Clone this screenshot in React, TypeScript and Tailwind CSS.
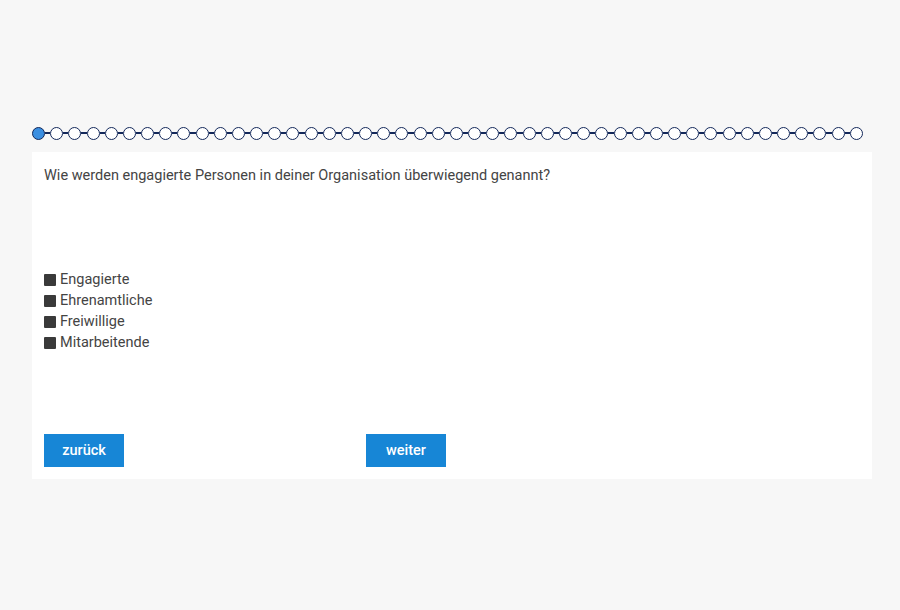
import React from "react";

const STEPS = 46;
const OPTIONS = ["Engagierte", "Ehrenamtliche", "Freiwillige", "Mitarbeitende"];

export default function App() {
  return (
    <div className="min-h-[610px] w-[900px] bg-[#f7f7f7] pt-[126px] font-['Roboto','Liberation_Sans',sans-serif]">
      <div className="mx-[32px] w-[836px]">
        {/* Fortschritt */}
        <div className="flex h-[14px] w-[831px] items-center">
          {Array.from({ length: STEPS }).map((_, i) => (
            <React.Fragment key={i}>
              {i > 0 && <div className="h-[2px] flex-1 bg-[#13285a]" />}
              <div
                className={`h-[13px] w-[13px] shrink-0 rounded-full border-[1.5px] border-[#13285a] ${
                  i === 0 ? "bg-[#3b8fe1]" : "bg-white"
                }`}
              />
            </React.Fragment>
          ))}
        </div>

        {/* Frage */}
        <div className="mt-[12px] h-[327px] w-[840px] bg-white px-[12px] pt-[14px]">
          <p className="text-[14.5px] leading-[20px] text-[#444]">
            Wie werden engagierte Personen in deiner Organisation überwiegend genannt?
          </p>

          <ul className="mt-[83px] text-[14.5px] leading-[21px] text-[#444]">
            {OPTIONS.map((o) => (
              <li key={o} className="flex items-center gap-[4px]">
                <span className="h-[12px] w-[12px] rounded-[1px] bg-[#3a3a3a]" />
                <span>{o}</span>
              </li>
            ))}
          </ul>

          <div className="mt-[81px] flex gap-[242px]">
            <button className="h-[33px] w-[80px] bg-[#1786d6] pt-[1px] text-[14.5px] font-medium text-white">
              zurück
            </button>
            <button className="h-[33px] w-[80px] bg-[#1786d6] pt-[1px] text-[14.5px] font-medium text-white">
              weiter
            </button>
          </div>
        </div>
      </div>
    </div>
  );
}
